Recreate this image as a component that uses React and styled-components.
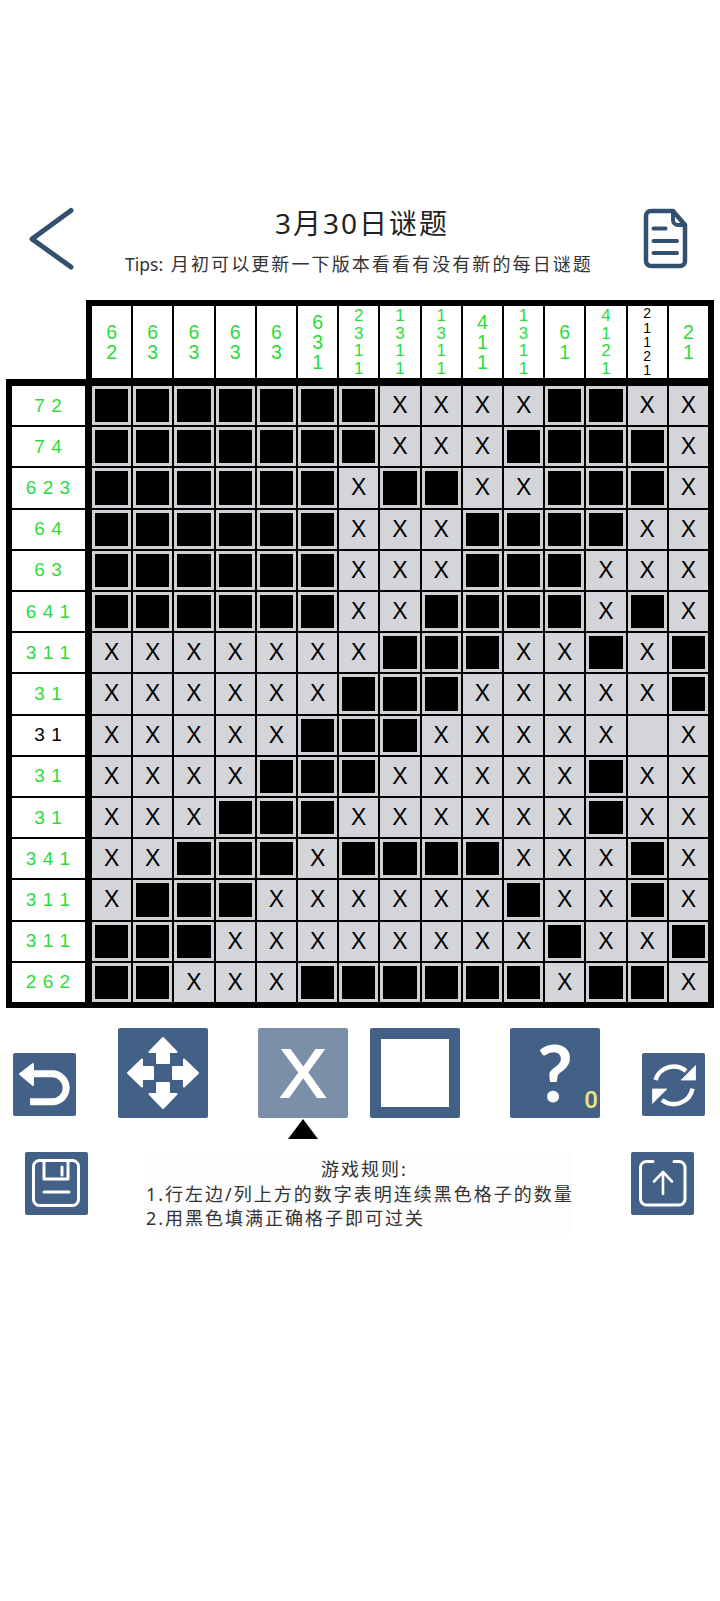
import React from "react";
import styled, { createGlobalStyle } from "styled-components";

const Global = createGlobalStyle`
  html, body { margin: 0; padding: 0; background: #fff; }
  body { font-family: "Noto Sans", "Noto Sans CJK SC", sans-serif; }
`;

const NAVY = "#34506f";
const GREEN = "#2bdc3a";

const Page = styled.div`
  width: 720px;
  height: 1601px;
  overflow: hidden;
  padding-top: 205px;
  box-sizing: border-box;
`;

const Header = styled.header`
  display: flex;
  align-items: flex-start;
  padding: 1px 32px 0 28px;
`;

const HeaderIcon = styled.svg`
  flex: none;
  display: block;
  fill: none;
  stroke: ${NAVY};
  stroke-linecap: round;
  stroke-linejoin: round;
`;

const TitleBlock = styled.div`
  flex: 1;
  min-width: 0;
  text-align: center;
`;

const Title = styled.h1`
  margin: -1px 0 0;
  font-size: 28px;
  line-height: 36px;
  font-weight: 400;
  letter-spacing: 2px;
  color: #222;
  transform: translateX(3px);
`;

const Subtitle = styled.p`
  margin: 11px 0 0;
  font-size: 18px;
  line-height: 24px;
  letter-spacing: 2.100px;
  color: #333;
  white-space: nowrap;
`;

const TipsLabel = styled.span`
  letter-spacing: 0;
  font-size: 17.500px;
  margin-right: 1px;
`;

const Board = styled.section`
  display: grid;
  grid-template-columns: 80px 628px;
  grid-template-rows: 79px 629px;
  margin: 24px 0 0 6px;
  width: 708px;
  font-family: "Liberation Sans", sans-serif;
`;

const Corner = styled.div`
  background: #fff;
`;

const TopClues = styled.div`
  display: grid;
  grid-template-columns: repeat(15, 1fr);
  gap: 2px;
  padding: 6px 6px 1px;
  background: #000;
`;

const ColClue = styled.div`
  display: flex;
  flex-direction: column;
  align-items: center;
  justify-content: center;
  background: #fff;
  color: ${(p) => (p.$done ? GREEN : "#000")};
  font-size: ${(p) => (p.$count >= 5 ? 14 : p.$count === 4 ? 17 : 19.5)}px;
  line-height: ${(p) => (p.$count >= 5 ? 14.2 : p.$count === 4 ? 17.5 : 20)}px;
`;

const LeftClues = styled.div`
  display: grid;
  grid-template-rows: repeat(15, 1fr);
  gap: 2px;
  padding: 7px 1.500px 6px 6px;
  background: #000;
`;

const RowClue = styled.div`
  display: flex;
  align-items: center;
  justify-content: center;
  background: #fff;
  color: ${(p) => (p.$done ? GREEN : "#000")};
  font-size: 19px;
  letter-spacing: 0.500px;
  white-space: pre;
`;

const Cells = styled.div`
  display: grid;
  grid-template-columns: repeat(15, 1fr);
  grid-template-rows: repeat(15, 1fr);
  gap: 2px;
  padding: 7px 6px 6px;
  background: #000;
`;

const Cell = styled.div`
  display: flex;
  align-items: center;
  justify-content: center;
  box-sizing: border-box;
  background: ${(p) => (p.$kind === "B" ? "#000" : "#d4d5d9")};
  border: ${(p) => (p.$kind === "B" ? "3px solid #cfd0d3" : "none")};
  color: #000;
  font-size: 23px;
  line-height: 1;
`;

const Controls = styled.div`
  display: flex;
  align-items: flex-end;
  gap: 42px;
  margin: 20px 0 0 13px;
`;

const CenterTools = styled.div`
  display: flex;
  gap: 50px;
`;

const ModeTools = styled.div`
  display: flex;
  gap: 22px;
`;

const Tool = styled.div`
  position: relative;
  flex: none;
  display: flex;
  align-items: center;
  justify-content: center;
  box-sizing: border-box;
  width: ${(p) => (p.$big ? 90 : 63)}px;
  height: ${(p) => (p.$big ? 90 : 63)}px;
  margin-bottom: ${(p) => (p.$big ? 0 : 2)}px;
  border-radius: 2px;
  background: ${(p) => (p.$active ? "#7b8fa9" : "#436086")};
  color: #fff;
`;

const ToolIcon = styled.svg`
  display: block;
  fill: none;
  stroke: #fff;
  stroke-linecap: round;
  stroke-linejoin: round;
`;

const ModeX = styled.span`
  font-family: "Liberation Sans", sans-serif;
  font-size: 69px;
  line-height: 1;
  -webkit-text-stroke: 2px #fff;
`;

const FillSwatch = styled.div`
  width: 68px;
  height: 68px;
  background: #fff;
`;

const Question = styled.span`
  font-family: "Lato", sans-serif;
  font-weight: 700;
  font-size: 78px;
  line-height: 1;
  transform: translate(0, -1px);
`;

const HintCount = styled.span`
  position: absolute;
  right: 2px;
  bottom: 6px;
  font-family: "Roboto", sans-serif;
  font-weight: 500;
  font-size: 24px;
  line-height: 1;
  color: #e9e883;
`;

const Pointer = styled.div`
  position: absolute;
  top: calc(100% + 1px);
  left: 30px;
  width: 0;
  height: 0;
  border-left: 15px solid transparent;
  border-right: 15px solid transparent;
  border-bottom: 20px solid #000;
`;

const Footer = styled.div`
  display: flex;
  align-items: flex-start;
  margin: 34px 0 0 25px;
  gap: 58px;
`;

const Rules = styled.div`
  width: 427px;
  height: 81px;
  box-sizing: border-box;
  padding-top: 5px;
  flex: none;
  background: #fdfdfd;
  font-size: 18px;
  line-height: 24.500px;
  letter-spacing: 2px;
  color: #333;
  white-space: nowrap;
`;

const RulesTitle = styled.div`
  text-align: center;
  padding-left: 10px;
`;

const FooterTool = styled(Tool)`
  margin-bottom: 0;
`;

const ROWS = [
  ["7 2", "BBBBBBBxxxxBBxx"],
  ["7 4", "BBBBBBBxxxBBBBx"],
  ["6 2 3", "BBBBBBxBBxxBBBx"],
  ["6 4", "BBBBBBxxxBBBBxx"],
  ["6 3", "BBBBBBxxxBBBxxx"],
  ["6 4 1", "BBBBBBxxBBBBxBx"],
  ["3 1 1", "xxxxxxxBBBxxBxB"],
  ["3 1", "xxxxxxBBBxxxxxB"],
  ["3 1", "xxxxxBBBxxxxx.x", true],
  ["3 1", "xxxxBBBxxxxxBxx"],
  ["3 1", "xxxBBBxxxxxxBxx"],
  ["3 4 1", "xxBBBxBBBBxxxBx"],
  ["3 1 1", "xBBBxxxxxxBxxBx"],
  ["3 1 1", "BBBxxxxxxxxBxxB"],
  ["2 6 2", "BBxxxBBBBBBxBBx"],
];

const COLS = ["62","63","63","63","63","631","2311","1311","1311","411","1311","61","4121","21121","21"];

const Undo = () => (
  <ToolIcon width="63" height="63" viewBox="0 0 63 63">
    <path d="M18 20.800H39.200A14 14 0 0 1 39.200 48.800H17" strokeWidth="7" strokeLinecap="butt" />
    <path d="M7 21 20 11V32Z" fill="#fff" strokeWidth="2" />
  </ToolIcon>
);

const Move = () => (
  <ToolIcon width="90" height="90" viewBox="0 0 90 90">
    {[0, 90, 180, 270].map((a) => (
      <path key={a} d="M45 10 58.500 24H51V35H39V24H31.500Z" fill="#fff" strokeWidth="2" transform={`rotate(${a} 45 45)`} />
    ))}
  </ToolIcon>
);

const Refresh = () => (
  <ToolIcon width="63" height="63" viewBox="0 0 63 63">
    <path d="M13.500 27A19 18.500 0 0 1 44 18" strokeWidth="4.500" strokeLinecap="butt" />
    <path d="M50.500 35.600A19 18.500 0 0 1 20 47" strokeWidth="4.500" strokeLinecap="butt" />
    <path d="M53.500 13V27H39.500Z" fill="#fff" strokeWidth="0.800" />
    <path d="M10.500 50V36H24.500Z" fill="#fff" strokeWidth="0.800" />
  </ToolIcon>
);

const Save = () => (
  <ToolIcon width="63" height="63" viewBox="0 0 63 63">
    <rect x="8.500" y="8.500" width="45" height="45" rx="6" strokeWidth="3" />
    <path d="M19 9V27H43V9" strokeWidth="3" />
    <path d="M37 15V23" strokeWidth="3" />
    <path d="M19 40H44" strokeWidth="3" />
  </ToolIcon>
);

const Share = () => (
  <ToolIcon width="63" height="63" viewBox="0 0 63 63">
    <path d="M22 9.500H15A6 6 0 0 0 9.500 15.500V47A6 6 0 0 0 15.500 53H48A6 6 0 0 0 54 47V15.500A6 6 0 0 0 48 9.500H43" strokeWidth="3" />
    <path d="M32 42V20M23 29.500 32 20 41 29.500" strokeWidth="2.600" />
  </ToolIcon>
);

export default function App() {
  return (
    <Page>
      <Global />
      <Header>
        <HeaderIcon width="48" height="64" viewBox="0 0 48 64">
          <path d="M43 4.500 4 33 43 61" strokeWidth="5" />
        </HeaderIcon>
        <TitleBlock>
          <Title>3月30日谜题</Title>
          <Subtitle><TipsLabel>Tips:</TipsLabel> 月初可以更新一下版本看看有没有新的每日谜题</Subtitle>
        </TitleBlock>
        <HeaderIcon width="46" height="64" viewBox="0 -2 46 64">
          <path d="M9 3H31L43 17V53A5 5 0 0 1 38 58H9A5 5 0 0 1 4 53V8A5 5 0 0 1 9 3Z" strokeWidth="4.500" />
          <path d="M31 3V12A5 5 0 0 0 36 17H43" strokeWidth="4" />
          <path d="M11.500 20.500H23.500M11.500 33H35M11.500 45H35" strokeWidth="4" />
        </HeaderIcon>
      </Header>

      <Board>
        <Corner />
        <TopClues>
          {COLS.map((c, i) => (
            <ColClue key={i} $count={c.length} $done={i !== 13}>
              {c.split("").map((d, j) => (
                <span key={j}>{d}</span>
              ))}
            </ColClue>
          ))}
        </TopClues>
        <LeftClues>
          {ROWS.map(([label, , pending], i) => (
            <RowClue key={i} $done={!pending}>{label}</RowClue>
          ))}
        </LeftClues>
        <Cells>
          {ROWS.flatMap(([, cells], r) =>
            cells.split("").map((k, c) => (
              <Cell key={`${r}-${c}`} $kind={k}>{k === "x" ? "X" : ""}</Cell>
            ))
          )}
        </Cells>
      </Board>

      <Controls>
        <Tool><Undo /></Tool>
        <CenterTools>
          <Tool $big><Move /></Tool>
          <ModeTools>
            <Tool $big $active>
              <ModeX>X</ModeX>
              <Pointer />
            </Tool>
            <Tool $big><FillSwatch /></Tool>
          </ModeTools>
          <Tool $big>
            <Question>?</Question>
            <HintCount>0</HintCount>
          </Tool>
        </CenterTools>
        <Tool><Refresh /></Tool>
      </Controls>

      <Footer>
        <FooterTool><Save /></FooterTool>
        <Rules>
          <RulesTitle>游戏规则:</RulesTitle>
          <div>1.行左边/列上方的数字表明连续黑色格子的数量</div>
          <div>2.用黑色填满正确格子即可过关</div>
        </Rules>
        <FooterTool><Share /></FooterTool>
      </Footer>
    </Page>
  );
}
